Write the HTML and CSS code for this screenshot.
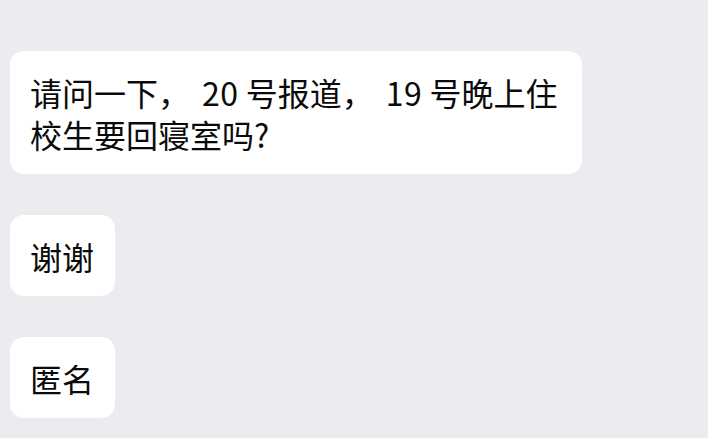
FILE: index.html
```html
<!DOCTYPE html>
<html lang="zh-CN">
<head>
<meta charset="utf-8">
<link rel="stylesheet" href="styles.css">
</head>
<body>
<div class="chat">
  <div class="bubble">请问一下，<span class="num">20</span> 号报道，<span class="num">19</span> 号晚上住校生要回寝室吗?</div>
  <div class="bubble">谢谢</div>
  <div class="bubble">匿名</div>
</div>
</body>
</html>
```
FILE: styles.css
```css
html, body {
  margin: 0;
  padding: 0;
  background: #ebebf0;
}
body {
  width: 708px;
  height: 438px;
  overflow: hidden;
  font-family: "Noto Sans CJK SC", "Noto Sans", sans-serif;
  color: #0a0a0a;
}
.chat {
  display: flex;
  flex-direction: column;
  align-items: flex-start;
  gap: 41px;
  padding: 51px 0 0 10px;
}
.bubble {
  background: #fff;
  border-radius: 14px;
  padding: 19.5px 21px 19.5px 20px;
  font-size: 32px;
  line-height: 42px;
  max-width: 531px;
}
.num {
  margin-left: 12px;
  letter-spacing: 0.5px;
}
```
